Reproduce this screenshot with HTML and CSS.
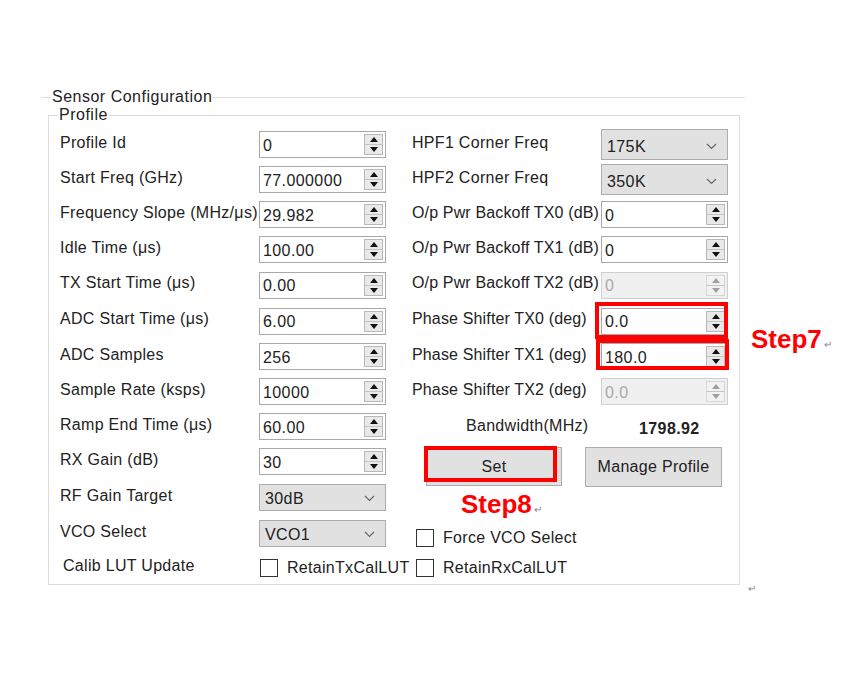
FILE: index.html
```html
<!DOCTYPE html>
<html>
<head>
<meta charset="utf-8">
<link rel="stylesheet" href="styles.css">
</head>
<body>
<div class="page">
  <fieldset class="outer">
    <legend>Sensor Configuration</legend>
    <fieldset class="inner">
      <legend>Profile</legend>
      <div class="grid">
        <!-- row 1 -->
        <div class="lbl">Profile Id</div>
        <div class="cell"><div class="spin"><span class="val">0</span><span class="arrows"><i><svg width="8" height="5"><path d="M0 5L4 0L8 5Z"/></svg></i><i><svg width="8" height="5"><path d="M0 0L4 5L8 0Z"/></svg></i></span></div></div>
        <div class="lbl">HPF1 Corner Freq</div>
        <div class="cell"><div class="sel tall"><span>175K</span><svg width="11" height="7" viewBox="0 0 11 7"><polyline points="1,1 5.5,5.5 10,1"/></svg></div></div>
        <!-- row 2 -->
        <div class="lbl">Start Freq (GHz)</div>
        <div class="cell"><div class="spin"><span class="val">77.000000</span><span class="arrows"><i><svg width="8" height="5"><path d="M0 5L4 0L8 5Z"/></svg></i><i><svg width="8" height="5"><path d="M0 0L4 5L8 0Z"/></svg></i></span></div></div>
        <div class="lbl">HPF2 Corner Freq</div>
        <div class="cell"><div class="sel tall"><span>350K</span><svg width="11" height="7" viewBox="0 0 11 7"><polyline points="1,1 5.5,5.5 10,1"/></svg></div></div>
        <!-- row 3 -->
        <div class="lbl">Frequency Slope (MHz/μs)</div>
        <div class="cell"><div class="spin"><span class="val">29.982</span><span class="arrows"><i><svg width="8" height="5"><path d="M0 5L4 0L8 5Z"/></svg></i><i><svg width="8" height="5"><path d="M0 0L4 5L8 0Z"/></svg></i></span></div></div>
        <div class="lbl r">O/p Pwr Backoff TX0 (dB)</div>
        <div class="cell"><div class="spin"><span class="val">0</span><span class="arrows"><i><svg width="8" height="5"><path d="M0 5L4 0L8 5Z"/></svg></i><i><svg width="8" height="5"><path d="M0 0L4 5L8 0Z"/></svg></i></span></div></div>
        <!-- row 4 -->
        <div class="lbl">Idle Time (μs)</div>
        <div class="cell"><div class="spin"><span class="val">100.00</span><span class="arrows"><i><svg width="8" height="5"><path d="M0 5L4 0L8 5Z"/></svg></i><i><svg width="8" height="5"><path d="M0 0L4 5L8 0Z"/></svg></i></span></div></div>
        <div class="lbl r">O/p Pwr Backoff TX1 (dB)</div>
        <div class="cell"><div class="spin"><span class="val">0</span><span class="arrows"><i><svg width="8" height="5"><path d="M0 5L4 0L8 5Z"/></svg></i><i><svg width="8" height="5"><path d="M0 0L4 5L8 0Z"/></svg></i></span></div></div>
        <!-- row 5 -->
        <div class="lbl">TX Start Time (μs)</div>
        <div class="cell"><div class="spin"><span class="val">0.00</span><span class="arrows"><i><svg width="8" height="5"><path d="M0 5L4 0L8 5Z"/></svg></i><i><svg width="8" height="5"><path d="M0 0L4 5L8 0Z"/></svg></i></span></div></div>
        <div class="lbl r">O/p Pwr Backoff TX2 (dB)</div>
        <div class="cell"><div class="spin disabled"><span class="val">0</span><span class="arrows"><i><svg width="8" height="5"><path d="M0 5L4 0L8 5Z"/></svg></i><i><svg width="8" height="5"><path d="M0 0L4 5L8 0Z"/></svg></i></span></div></div>
        <!-- row 6 -->
        <div class="lbl">ADC Start Time (μs)</div>
        <div class="cell"><div class="spin"><span class="val">6.00</span><span class="arrows"><i><svg width="8" height="5"><path d="M0 5L4 0L8 5Z"/></svg></i><i><svg width="8" height="5"><path d="M0 0L4 5L8 0Z"/></svg></i></span></div></div>
        <div class="lbl r">Phase Shifter TX0 (deg)</div>
        <div class="cell"><div class="spin"><span class="val">0.0</span><span class="arrows"><i><svg width="8" height="5"><path d="M0 5L4 0L8 5Z"/></svg></i><i><svg width="8" height="5"><path d="M0 0L4 5L8 0Z"/></svg></i></span></div><span class="hl hl-tx0"></span><span class="step step7">Step7<small>↵</small></span></div>
        <!-- row 7 -->
        <div class="lbl">ADC Samples</div>
        <div class="cell"><div class="spin"><span class="val">256</span><span class="arrows"><i><svg width="8" height="5"><path d="M0 5L4 0L8 5Z"/></svg></i><i><svg width="8" height="5"><path d="M0 0L4 5L8 0Z"/></svg></i></span></div></div>
        <div class="lbl r">Phase Shifter TX1 (deg)</div>
        <div class="cell"><div class="spin"><span class="val">180.0</span><span class="arrows"><i><svg width="8" height="5"><path d="M0 5L4 0L8 5Z"/></svg></i><i><svg width="8" height="5"><path d="M0 0L4 5L8 0Z"/></svg></i></span></div><span class="hl hl-tx1"></span></div>
        <!-- row 8 -->
        <div class="lbl">Sample Rate (ksps)</div>
        <div class="cell"><div class="spin"><span class="val">10000</span><span class="arrows"><i><svg width="8" height="5"><path d="M0 5L4 0L8 5Z"/></svg></i><i><svg width="8" height="5"><path d="M0 0L4 5L8 0Z"/></svg></i></span></div></div>
        <div class="lbl r">Phase Shifter TX2 (deg)</div>
        <div class="cell"><div class="spin disabled"><span class="val">0.0</span><span class="arrows"><i><svg width="8" height="5"><path d="M0 5L4 0L8 5Z"/></svg></i><i><svg width="8" height="5"><path d="M0 0L4 5L8 0Z"/></svg></i></span></div></div>
        <!-- row 9 -->
        <div class="lbl">Ramp End Time (μs)</div>
        <div class="cell"><div class="spin"><span class="val">60.00</span><span class="arrows"><i><svg width="8" height="5"><path d="M0 5L4 0L8 5Z"/></svg></i><i><svg width="8" height="5"><path d="M0 0L4 5L8 0Z"/></svg></i></span></div></div>
        <div class="lbl bw">Bandwidth(MHz)</div>
        <div class="cell bwval">1798.92</div>
        <!-- row 10 -->
        <div class="lbl">RX Gain (dB)</div>
        <div class="cell"><div class="spin"><span class="val">30</span><span class="arrows"><i><svg width="8" height="5"><path d="M0 5L4 0L8 5Z"/></svg></i><i><svg width="8" height="5"><path d="M0 0L4 5L8 0Z"/></svg></i></span></div></div>
        <div class="btns">
          <div class="btnwrap"><button class="btn set">Set</button><span class="hl hl-set"></span></div>
          <button class="btn manage">Manage Profile</button>
        </div>
        <!-- row 11 -->
        <div class="lbl">RF Gain Target</div>
        <div class="cell"><div class="sel"><span>30dB</span><svg width="11" height="7" viewBox="0 0 11 7"><polyline points="1,1 5.5,5.5 10,1"/></svg></div></div>
        <div class="step8cell"><span class="step">Step8<small>↵</small></span></div>
        <!-- row 12 -->
        <div class="lbl">VCO Select</div>
        <div class="cell"><div class="sel"><span>VCO1</span><svg width="11" height="7" viewBox="0 0 11 7"><polyline points="1,1 5.5,5.5 10,1"/></svg></div></div>
        <div class="chk span2 force"><span class="cb"></span>Force VCO Select</div>
        <!-- row 13 -->
        <div class="lbl calib">Calib LUT Update</div>
        <div class="chk"><span class="cb"></span>RetainTxCalLUT</div>
        <div class="chk span2"><span class="cb"></span>RetainRxCalLUT</div>
      </div>
    </fieldset>
  </fieldset>
  <div class="ret">↵</div>
</div>
</body>
</html>
```
FILE: styles.css
```css
html, body {
  margin: 0;
  background: #fff;
}
body {
  font-family: "Liberation Sans", Arial, sans-serif;
  font-size: 16px;
  color: #222;
}
.page {
  padding: 88px 0 0 41px;
}
fieldset {
  margin: 0;
  min-width: 0;
}
legend {
  font-size: 16px;
  line-height: 18px;
  padding: 0 1px;
  letter-spacing: 0.5px;
  color: #222;
}
.outer {
  width: 704px;
  box-sizing: border-box;
  border: 0;
  border-top: 1px solid #dcdcdc;
  padding: 0 5px 0 7px;
}
.outer > legend {
  margin-left: 3px;
}
.inner {
  width: 692px;
  box-sizing: border-box;
  border: 1px solid #dcdcdc;
  padding: 3px 0 0 11px;
}
.inner > legend {
  margin-left: -2px;
}
.grid {
  display: grid;
  grid-template-columns: 199px 153px 189px 127px;
  grid-template-rows: 35px 35px 35px 35px 36px 36px 35px 35px 35px 35px 37px 35px 33px;
}
.lbl {
  display: flex;
  align-items: center;
  white-space: nowrap;
  letter-spacing: 0.3px;
  padding-bottom: 4px;
  box-sizing: border-box;
}
.lbl.r {
  letter-spacing: 0.15px;
}
.cell {
  display: flex;
  align-items: center;
  position: relative;
}
.spin {
  width: 127px;
  height: 27px;
  box-sizing: border-box;
  border: 1px solid #a8a8a8;
  background: #fff;
  display: flex;
  align-items: center;
  padding: 0 2px 0 3px;
}
.spin .val {
  flex: 1;
  letter-spacing: 0.4px;
  padding-top: 2px;
}
.arrows {
  width: 19px;
  height: 21px;
  box-sizing: border-box;
  border: 1px solid #b9b9b9;
  background: #e9e9e9;
  display: flex;
  flex-direction: column;
}
.arrows i {
  flex: 1;
  display: flex;
  align-items: center;
  justify-content: center;
}
.arrows i + i {
  border-top: 1px solid #c4c4c4;
}
.arrows svg path {
  fill: #111;
}
.spin.disabled {
  background: #f0f0f0;
  border-color: #cfcfcf;
  color: #a9a9a9;
}
.spin.disabled .arrows {
  border-color: #d6d6d6;
  background: #f2f2f2;
}
.spin.disabled .arrows svg path {
  fill: #a0a0a0;
}
.sel {
  width: 127px;
  height: 27px;
  box-sizing: border-box;
  border: 1px solid #adadad;
  background: #e1e1e1;
  display: flex;
  align-items: center;
  justify-content: space-between;
  padding: 2px 10px 0 5px;
  letter-spacing: 0.4px;
}
.sel.tall {
  height: 31px;
  padding-top: 4px;
}
.sel svg polyline {
  fill: none;
  stroke: #666;
  stroke-width: 1.2;
}
.hl {
  position: absolute;
  border: 4px solid #f00;
  pointer-events: none;
}
.hl-tx0 {
  left: -6px;
  right: 0;
  top: -1px;
  bottom: 0;
}
.hl-tx1 {
  left: -5px;
  right: -1px;
  top: 0;
  bottom: 4px;
}
.step {
  font-family: "Liberation Sans", Arial, sans-serif;
  font-weight: bold;
  font-size: 26px;
  color: #f00;
  white-space: nowrap;
}
.step small {
  font-size: 10px;
  font-weight: normal;
  color: #888;
  margin-left: 2px;
}
.step7 {
  position: absolute;
  left: 150px;
  top: 21px;
}
.bw {
  padding-left: 54px;
  padding-bottom: 2px;
}
.bwval {
  padding-left: 38px;
  font-weight: bold;
  letter-spacing: 0.4px;
  padding-top: 4px;
  box-sizing: border-box;
}
.btns {
  grid-column: 3 / span 2;
  display: flex;
  align-items: flex-start;
  gap: 23px;
  padding: 3px 0 0 14px;
}
.btnwrap {
  position: relative;
}
.btn {
  font-family: "Liberation Sans", Arial, sans-serif;
  font-size: 16px;
  letter-spacing: 0.3px;
  color: #222;
  background: #e1e1e1;
  border: 1px solid #adadad;
  height: 39px;
  padding: 0;
  margin: 0;
  display: block;
}
.btn.set {
  width: 136px;
}
.btn.manage {
  width: 137px;
  height: 40px;
}
.hl-set {
  left: -2px;
  right: 5px;
  top: -1px;
  bottom: 4px;
}
.step8cell {
  grid-column: 3 / span 2;
  display: flex;
  align-items: center;
  padding-left: 49px;
  padding-top: 14px;
}
.chk {
  display: flex;
  align-items: center;
  white-space: nowrap;
  letter-spacing: 0.3px;
  gap: 9px;
  padding-left: 1px;
}
.chk.span2 {
  grid-column: 3 / span 2;
  padding-left: 4px;
}
.chk.force {
  padding-top: 9px;
}
.cb {
  width: 18px;
  height: 18px;
  box-sizing: border-box;
  border: 1px solid #333;
  background: #fff;
  flex: none;
}
.calib {
  padding-left: 3px;
}
.ret {
  font-size: 10px;
  color: #888;
  margin: -2px 0 0 707px;
}
```
